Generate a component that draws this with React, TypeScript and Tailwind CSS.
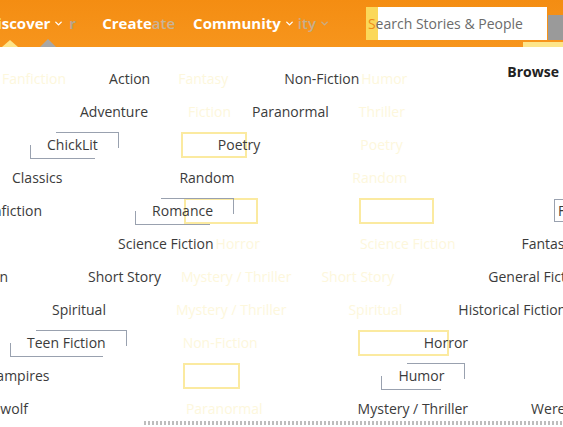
import { ChevronDown } from "lucide-react";

function Caret({ className }: { className: string }) {
  return <ChevronDown className={className} strokeWidth={3} />;
}

function Bracket({ children }: { children: React.ReactNode }) {
  // grey double-outline used on the highlighted genre links
  return (
    <span className="relative inline-block px-[3px]">
      <span className="pointer-events-none absolute -top-[2px] left-[12px] right-[-18px] h-[16px] border-t border-r border-gray-400" />
      <span className="pointer-events-none absolute bottom-[-4px] left-[-14px] right-[6px] h-[14px] border-b border-l border-gray-400" />
      {children}
    </span>
  );
}

function Ghost({ children, className = "" }: { children: React.ReactNode; className?: string }) {
  return <span className={`shrink-0 text-[#fdf7dc] ${className}`}>{children}</span>;
}

function YellowBox({ className }: { className: string }) {
  return <span className={`shrink-0 h-[26px] border-2 border-[#fbeaa0] ${className}`} />;
}

export default function App() {
  return (
    <div className="h-[427px] w-[563px] overflow-hidden bg-white font-['Open_Sans',sans-serif] text-[14px] text-[#3b3b3b]">
      <header className="relative flex h-[47px] items-center bg-gradient-to-b from-[#f48d12] to-[#f7951c]">
        <nav className="flex items-center text-[15px] font-bold text-white">
          <span className="-ml-[14px] flex items-center gap-[3px]">
            Discover
            <Caret className="h-[11px] w-[11px]" />
            <span className="ml-[2px] text-[#b9a58a]">r</span>
          </span>
          <span className="ml-[26px] flex items-center">
            Create<span className="font-semibold text-[#c9b497]">ate</span>
          </span>
          <span className="ml-[18px] flex items-center gap-[3px]">
            Community
            <Caret className="h-[11px] w-[11px]" />
            <span className="font-semibold text-[#c6ae8c]">ity</span>
            <Caret className="h-[11px] w-[11px] text-[#c6ae8c]" />
          </span>
        </nav>
        <div className="ml-[36px] flex h-[33px] w-[186px] items-center border-l-[12px] border-[#fbd85a] bg-white text-[14px] text-[#6b6b6b]">
          <span className="-ml-[10px] text-[#f08a16]">S</span>earch Stories &amp; People
        </div>
        <div className="mb-[7px] ml-[1px] h-[25px] w-[16px] self-end bg-[#9a9a9a]" />
        <span className="absolute bottom-0 left-[2px] h-0 w-0 border-x-[8px] border-b-[7px] border-x-transparent border-b-[#fde58a]" />
        <span className="absolute bottom-0 left-[40px] h-0 w-0 border-x-[8px] border-b-[8px] border-x-transparent border-b-[#a7a7a7]" />
        <span className="absolute bottom-0 right-0 h-[5px] w-[40px] bg-[#fde58a]" />
      </header>

      <div className="flex flex-col pt-[15px]">
        <div className="flex h-[33px] items-center">
          <Ghost className="ml-[2px]">Fanfiction</Ghost>
          <span className="ml-[43px] shrink-0">Action</span>
          <Ghost className="ml-[28px]">Fantasy</Ghost>
          <span className="ml-[56px] shrink-0">Non-Fiction</span>
          <Ghost className="ml-[2px]">Humor</Ghost>
          <span className="-mt-[14px] ml-[100px] shrink-0 font-bold text-[#222]">Browse</span>
        </div>
        <div className="flex h-[33px] items-center">
          <span className="ml-[80px] shrink-0">Adventure</span>
          <Ghost className="ml-[40px]">Fiction</Ghost>
          <span className="ml-[21px] shrink-0">Paranormal</span>
          <Ghost className="ml-[30px]">Thriller</Ghost>
        </div>
        <div className="flex h-[33px] items-center">
          <span className="ml-[44px] shrink-0">
            <Bracket>ChickLit</Bracket>
          </span>
          <YellowBox className="ml-[80px] w-[66px]" />
          <span className="-ml-[29px] shrink-0">Poetry</span>
          <Ghost className="ml-[100px]">Poetry</Ghost>
        </div>
        <div className="flex h-[33px] items-center">
          <span className="ml-[12px] shrink-0">Classics</span>
          <span className="ml-[117px] shrink-0">Random</span>
          <Ghost className="ml-[118px]">Random</Ghost>
        </div>
        <div className="flex h-[33px] items-center">
          <span className="-ml-[22px] shrink-0">Fanfiction</span>
          <span className="ml-[107px] shrink-0">
            <Bracket>Romance</Bracket>
          </span>
          <YellowBox className="-ml-[32px] w-[74px]" />
          <YellowBox className="ml-[101px] w-[75px]" />
          <span className="ml-[120px] shrink-0 border border-r-0 border-gray-400 pl-[3px]">F</span>
        </div>
        <div className="flex h-[33px] items-center">
          <span className="ml-[118px] shrink-0">Science Fiction</span>
          <Ghost className="ml-[2px]">Horror</Ghost>
          <Ghost className="ml-[100px]">Science Fiction</Ghost>
          <span className="ml-[66px] shrink-0">Fantasy</span>
        </div>
        <div className="flex h-[33px] items-center">
          <span className="-ml-[67px] shrink-0">Non-Fiction</span>
          <span className="ml-[80px] shrink-0">Short Story</span>
          <Ghost className="ml-[20px]">Mystery / Thriller</Ghost>
          <Ghost className="ml-[30px]">Short Story</Ghost>
          <span className="ml-[94px] shrink-0">General Fiction</span>
        </div>
        <div className="flex h-[33px] items-center">
          <span className="ml-[52px] shrink-0">Spiritual</span>
          <Ghost className="ml-[70px]">Mystery / Thriller</Ghost>
          <Ghost className="ml-[62px]">Spiritual</Ghost>
          <span className="ml-[56px] shrink-0">Historical Fiction</span>
        </div>
        <div className="flex h-[33px] items-center">
          <span className="ml-[24px] shrink-0">
            <Bracket>Teen Fiction</Bracket>
          </span>
          <Ghost className="ml-[74px]">Non-Fiction</Ghost>
          <YellowBox className="ml-[100px] w-[91px]" />
          <span className="-ml-[25px] shrink-0">Horror</span>
        </div>
        <div className="flex h-[33px] items-center">
          <span className="-ml-[12px] shrink-0">Vampires</span>
          <YellowBox className="ml-[134px] w-[57px]" />
          <span className="ml-[155px] shrink-0">
            <Bracket>Humor</Bracket>
          </span>
        </div>
        <div className="flex h-[33px] items-center">
          <span className="-ml-[34px] shrink-0">Werewolf</span>
          <Ghost className="ml-[158px]">Paranormal</Ghost>
          <span className="ml-[95px] shrink-0">Mystery / Thriller</span>
          <span className="ml-[63px] shrink-0">Werewolf</span>
        </div>
      </div>
      <div className="-mt-[4px] ml-[144px] h-[4px] bg-[repeating-linear-gradient(90deg,#bdbdbd_0_2px,#ffffff_2px_4px)]" />
    </div>
  );
}
